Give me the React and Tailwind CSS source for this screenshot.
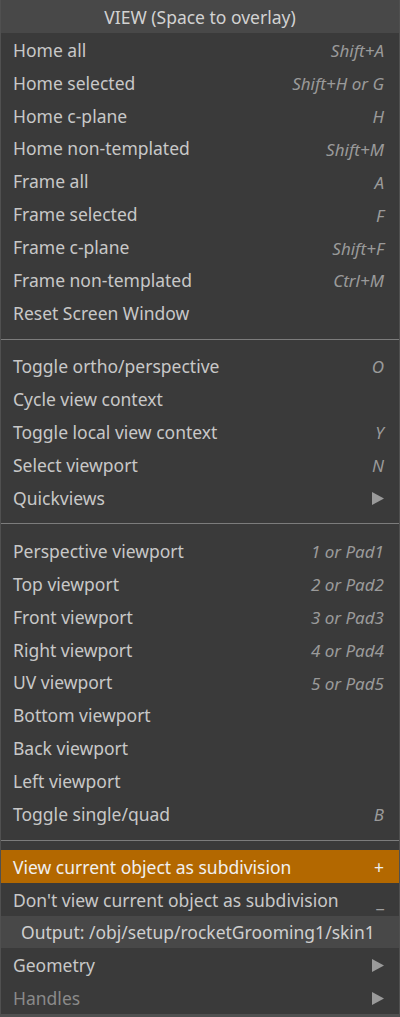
import React from 'react';

const sections = [
  [
    ['Home all', 'Shift+A'],
    ['Home selected', 'Shift+H or G'],
    ['Home c-plane', 'H'],
    ['Home non-templated', 'Shift+M'],
    ['Frame all', 'A'],
    ['Frame selected', 'F'],
    ['Frame c-plane', 'Shift+F'],
    ['Frame non-templated', 'Ctrl+M'],
    ['Reset Screen Window', ''],
  ],
  [
    ['Toggle ortho/perspective', 'O'],
    ['Cycle view context', ''],
    ['Toggle local view context', 'Y'],
    ['Select viewport', 'N'],
    ['Quickviews', '>'],
  ],
  [
    ['Perspective viewport', '1 or Pad1'],
    ['Top viewport', '2 or Pad2'],
    ['Front viewport', '3 or Pad3'],
    ['Right viewport', '4 or Pad4'],
    ['UV viewport', '5 or Pad5'],
    ['Bottom viewport', ''],
    ['Back viewport', ''],
    ['Left viewport', ''],
    ['Toggle single/quad', 'B'],
  ],
];

function Arrow() {
  return (
    <svg width="12" height="13" viewBox="0 0 12 13" className="fill-[#9a9a9a]">
      <path d="M0 0 L12 6.5 L0 13 Z" />
    </svg>
  );
}

function Row({ label, shortcut, dim, active }) {
  return (
    <div
      className={
        'flex items-center justify-between h-[33px] pt-[2px] pl-[12px] pr-[15px] ' +
        (active ? 'bg-[#b36800] text-[#f0f0f0]' : dim ? 'text-[#8a8a8a]' : 'text-[#c8c8c8]')
      }
    >
      <span>{label}</span>
      {shortcut === '>' ? (
        <Arrow />
      ) : shortcut === '+' || shortcut === '_' ? (
        <span className={active ? 'text-[#f0f0f0]' : 'text-[#a0a0a0]'}>{shortcut}</span>
      ) : (
        <span className="italic text-[17px] text-[#9a9a9a]">{shortcut}</span>
      )}
    </div>
  );
}

function Separator() {
  return (
    <div className="h-[20px] flex items-center">
      <div className="h-px w-full bg-[#7c7c7c]" />
    </div>
  );
}

export default function App() {
  return (
    <div
      className="w-[400px] h-[1017px] bg-[#3a3a3a] border-x border-b-[3px] border-[#505050] text-[17.5px] leading-none flex flex-col"
      style={{ fontFamily: '"Noto Sans", "Open Sans", sans-serif' }}
    >
      <div className="h-[33px] pt-[2px] bg-[#484848] flex items-center justify-center text-[#d2d2d2]">
        VIEW (Space to overlay)
      </div>
      {sections.map((rows, i) => (
        <React.Fragment key={i}>
          {i > 0 && <Separator />}
          {rows.map(([l, s]) => (
            <Row key={l} label={l} shortcut={s} />
          ))}
        </React.Fragment>
      ))}
      <Separator />
      <Row label="View current object as subdivision" shortcut="+" active />
      <Row label="Don't view current object as subdivision" shortcut="_" />
      <div className="h-[32px] pt-[2px] bg-[#484848] flex items-center pl-[20px] text-[#cfcfcf]">
        Output: /obj/setup/rocketGrooming1/skin1
      </div>
      <Row label="Geometry" shortcut=">" />
      <Row label="Handles" shortcut=">" dim />
    </div>
  );
}
